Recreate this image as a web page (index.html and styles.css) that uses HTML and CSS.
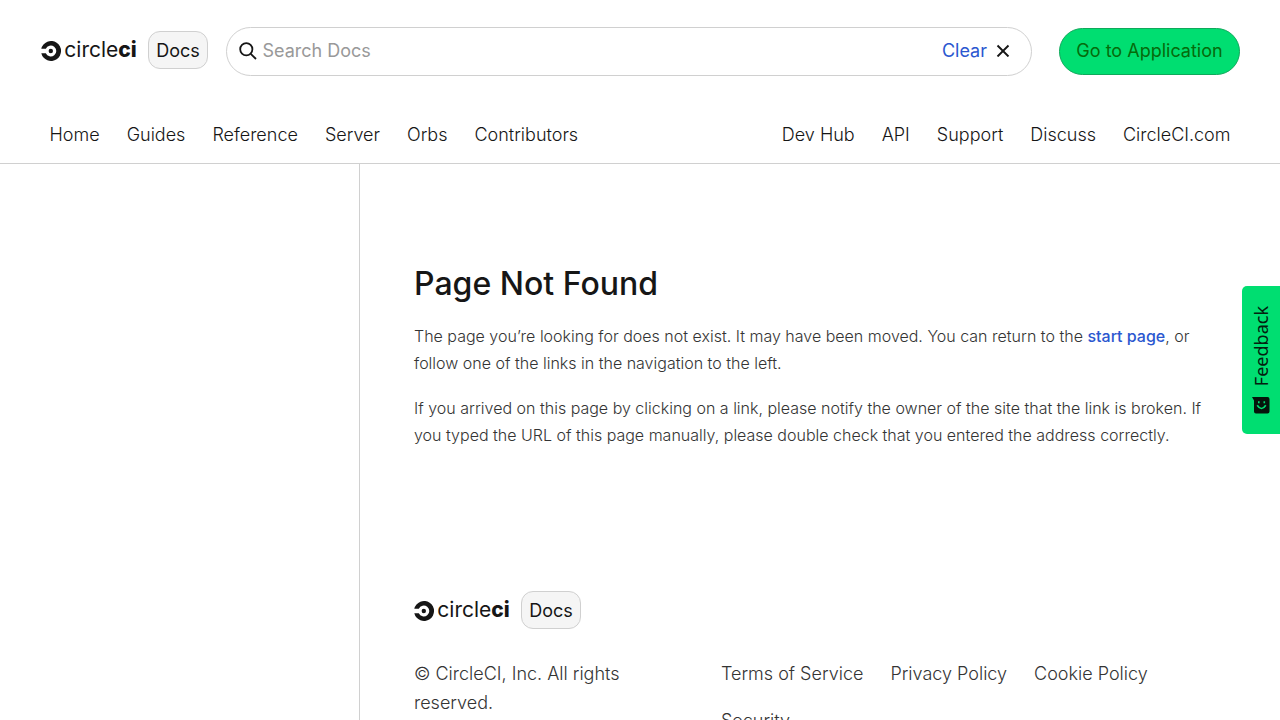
FILE: index.html
```html
<!DOCTYPE html>
<html lang="en">

<head>
  <meta charset="UTF-8" />
  <meta name="viewport" content="width=device-width, initial-scale=1.0" />
  <title>Page Not Found - CircleCI Docs</title>
  <link rel="stylesheet" href="styles.css">
</head>

<body>
  <header class="header">
    <div class="header-top">
      <a class="brand" href="#">
        <svg class="logo" width="96" height="32" viewBox="0 -5 96 32">
          <path d="M.3 9.7A10 10 0 1 1 .3 14.3H4.8A5.5 5.5 0 1 0 4.8 9.7Z" />
          <circle cx="9.8" cy="12" r="2.2" />
          <text class="logo-text" x="23.3" y="17.6" textLength="72.5" lengthAdjust="spacingAndGlyphs">circle<tspan class="logo-bold">ci</tspan></text>
        </svg>
        <span class="docs-badge">Docs</span>
      </a>

      <div class="search">
        <svg class="search-icon" width="18" height="18" viewBox="0 0 18 18">
          <circle cx="7.3" cy="7.3" r="6.1" />
          <path d="M11.8 11.8L17 17" />
        </svg>
        <input class="search-input" type="text" placeholder="Search Docs" />
        <button class="search-clear">Clear
          <svg width="14" height="14" viewBox="0 0 14 14">
            <path d="M1.5 2.5L12.5 13.5M12.5 2.5L1.5 13.5" />
          </svg>
        </button>
      </div>

      <a class="app-btn" href="#">Go to Application</a>
    </div>

    <div class="header-nav">
      <nav class="nav">
        <a href="#">Home</a>
        <a href="#">Guides</a>
        <a href="#">Reference</a>
        <a href="#">Server</a>
        <a href="#">Orbs</a>
        <a href="#">Contributors</a>
      </nav>
      <nav class="nav">
        <a href="#">Dev Hub</a>
        <a href="#">API</a>
        <a href="#">Support</a>
        <a href="#">Discuss</a>
        <a href="#">CircleCI.com</a>
      </nav>
    </div>
  </header>

  <div class="body">
    <aside class="sidebar"></aside>
    <main class="main">
      <article class="doc">
        <h1>Page Not Found</h1>
        <p>The page you’re looking for does not exist. It may have been moved. You can return to the <a href="#">start page</a>, or follow one of the links in the navigation to the left.</p>
        <p>If you arrived on this page by clicking on a link, please notify the owner of the site that the link is broken. If you typed the URL of this page manually, please double check that you entered the address correctly.</p>
      </article>

      <footer class="footer">
        <a class="brand" href="#">
          <svg class="logo" width="96" height="32" viewBox="0 -5 96 32">
            <path d="M.3 9.7A10 10 0 1 1 .3 14.3H4.8A5.5 5.5 0 1 0 4.8 9.7Z" />
            <circle cx="9.8" cy="12" r="2.2" />
            <text class="logo-text" x="23.3" y="17.6" textLength="72.5" lengthAdjust="spacingAndGlyphs">circle<tspan class="logo-bold">ci</tspan></text>
          </svg>
          <span class="docs-badge">Docs</span>
        </a>
        <div class="footer-row">
          <div class="copyright">© CircleCI, Inc. All rights reserved.</div>
          <div class="footer-links">
            <a href="#">Terms of Service</a>
            <a href="#">Privacy Policy</a>
            <a href="#">Cookie Policy</a>
            <a href="#">Security</a>
          </div>
        </div>
      </footer>
    </main>
  </div>

  <button class="feedback">
    <svg width="18" height="17" viewBox="0 0 18 17">
      <path d="M0 0H15.5Q17.5 0 17.5 2V14.5Q17.5 16.5 15.5 16.5H4Q2 16.5 2 14.5V3.5Z" />
      <path class="face" d="M6.8 4.3V6.3M12.3 4.3V6.3M5.2 8.3Q9.5 14.8 13.8 8.3" />
    </svg>
    <span>Feedback</span>
  </button>
</body>

</html>
```
FILE: styles.css
```css
:root {
  --text: #161616;
  --body-text: #343434;
  --border: #d0d0d0;
  --link: #2b57d0;
  --green: #00de71;
}

* {
  box-sizing: border-box;
}

body {
  margin: 0;
  height: 720px;
  overflow: hidden;
  font-family: Inter, sans-serif;
  font-size: 18px;
  font-weight: 300;
  color: var(--text);
  background: #fff;
}

a {
  color: inherit;
  text-decoration: none;
}

.header {
  height: 164px;
  border-bottom: 1px solid var(--border);
}

.header-top {
  display: flex;
  align-items: center;
  height: 76px;
  padding: 26px 40px 0 41px;
}

.brand {
  display: flex;
  align-items: center;
  gap: 11px;
}

.logo {
  fill: var(--text);
}

.logo-text {
  font-family: Inter, sans-serif;
  font-size: 21px;
  font-weight: 400;
}

.logo-bold {
  font-weight: 800;
}

.docs-badge {
  width: 60px;
  height: 38px;
  line-height: 37px;
  text-align: center;
  font-weight: 400;
  background: #f5f5f5;
  border: 1px solid var(--border);
  border-radius: 12px;
}

.header .brand {
  margin-top: -2px;
}

.search {
  display: flex;
  align-items: center;
  width: 806px;
  height: 49px;
  margin-left: 18px;
  padding: 0 21px 0 12px;
  border: 1px solid var(--border);
  border-radius: 25px;
}

.search-icon {
  fill: none;
  stroke: var(--text);
  stroke-width: 1.8;
}

.search-input {
  flex: 1;
  padding: 0 0 2px 5.5px;
  border: 0;
  outline: none;
  background: none;
  font: 400 18px Inter, sans-serif;
}

.search-input::placeholder {
  color: #999;
}

.search-clear {
  display: flex;
  align-items: center;
  gap: 9px;
  padding: 0 0 2px;
  border: 0;
  background: none;
  font: 400 18px Inter, sans-serif;
  color: var(--link);
}

.search-clear svg {
  stroke: var(--text);
  stroke-width: 1.9;
}

.app-btn {
  width: 181px;
  height: 47px;
  line-height: 44px;
  margin-left: auto;
  text-align: center;
  font-weight: 400;
  color: #066b0b;
  background: var(--green);
  border: 1px solid #0fa95b;
  border-radius: 24px;
}

.header-nav {
  display: flex;
  justify-content: space-between;
  padding: 48px 49.5px 0;
}

.nav {
  display: flex;
  gap: 27px;
  line-height: 22px;
}

.body {
  display: flex;
  height: 556px;
}

.sidebar {
  width: 360px;
  flex-shrink: 0;
  border-right: 1px solid var(--border);
}

.main {
  flex: 1;
  padding: 100px 54px 0;
}

.doc {
  height: 327px;
  font-size: 16px;
  line-height: 27px;
  color: var(--body-text);
}

.doc h1 {
  margin: 0 0 19px;
  font-size: 32px;
  font-weight: 500;
  line-height: 40px;
  color: var(--text);
}

.doc p {
  margin: 0 0 18px;
}

.doc p a {
  font-weight: 500;
  color: var(--link);
}

.footer {
  color: var(--body-text);
}

.footer .brand {
  color: var(--text);
}

.footer-row {
  display: flex;
  margin-top: 30px;
  line-height: 29px;
}

.copyright {
  width: 240px;
  margin-right: 67px;
}

.footer-links {
  display: flex;
  flex-wrap: wrap;
  flex: 1;
  gap: 18px 27px;
}

/* tab pinned to the right edge of the window */
.feedback {
  position: fixed;
  top: 286px;
  right: 0;
  display: flex;
  flex-direction: column-reverse;
  align-items: center;
  gap: 11px;
  width: 38px;
  height: 148px;
  padding: 19px 0 20px;
  border: 0;
  border-radius: 5px 0 0 5px;
  background: var(--green);
  font: 400 18px "Noto Sans", sans-serif;
  color: #04200f;
}

.feedback span {
  writing-mode: vertical-rl;
  transform: rotate(180deg);
}

.feedback svg {
  fill: #06140b;
}

.feedback .face {
  fill: none;
  stroke: var(--green);
  stroke-width: 1.6;
}
```
